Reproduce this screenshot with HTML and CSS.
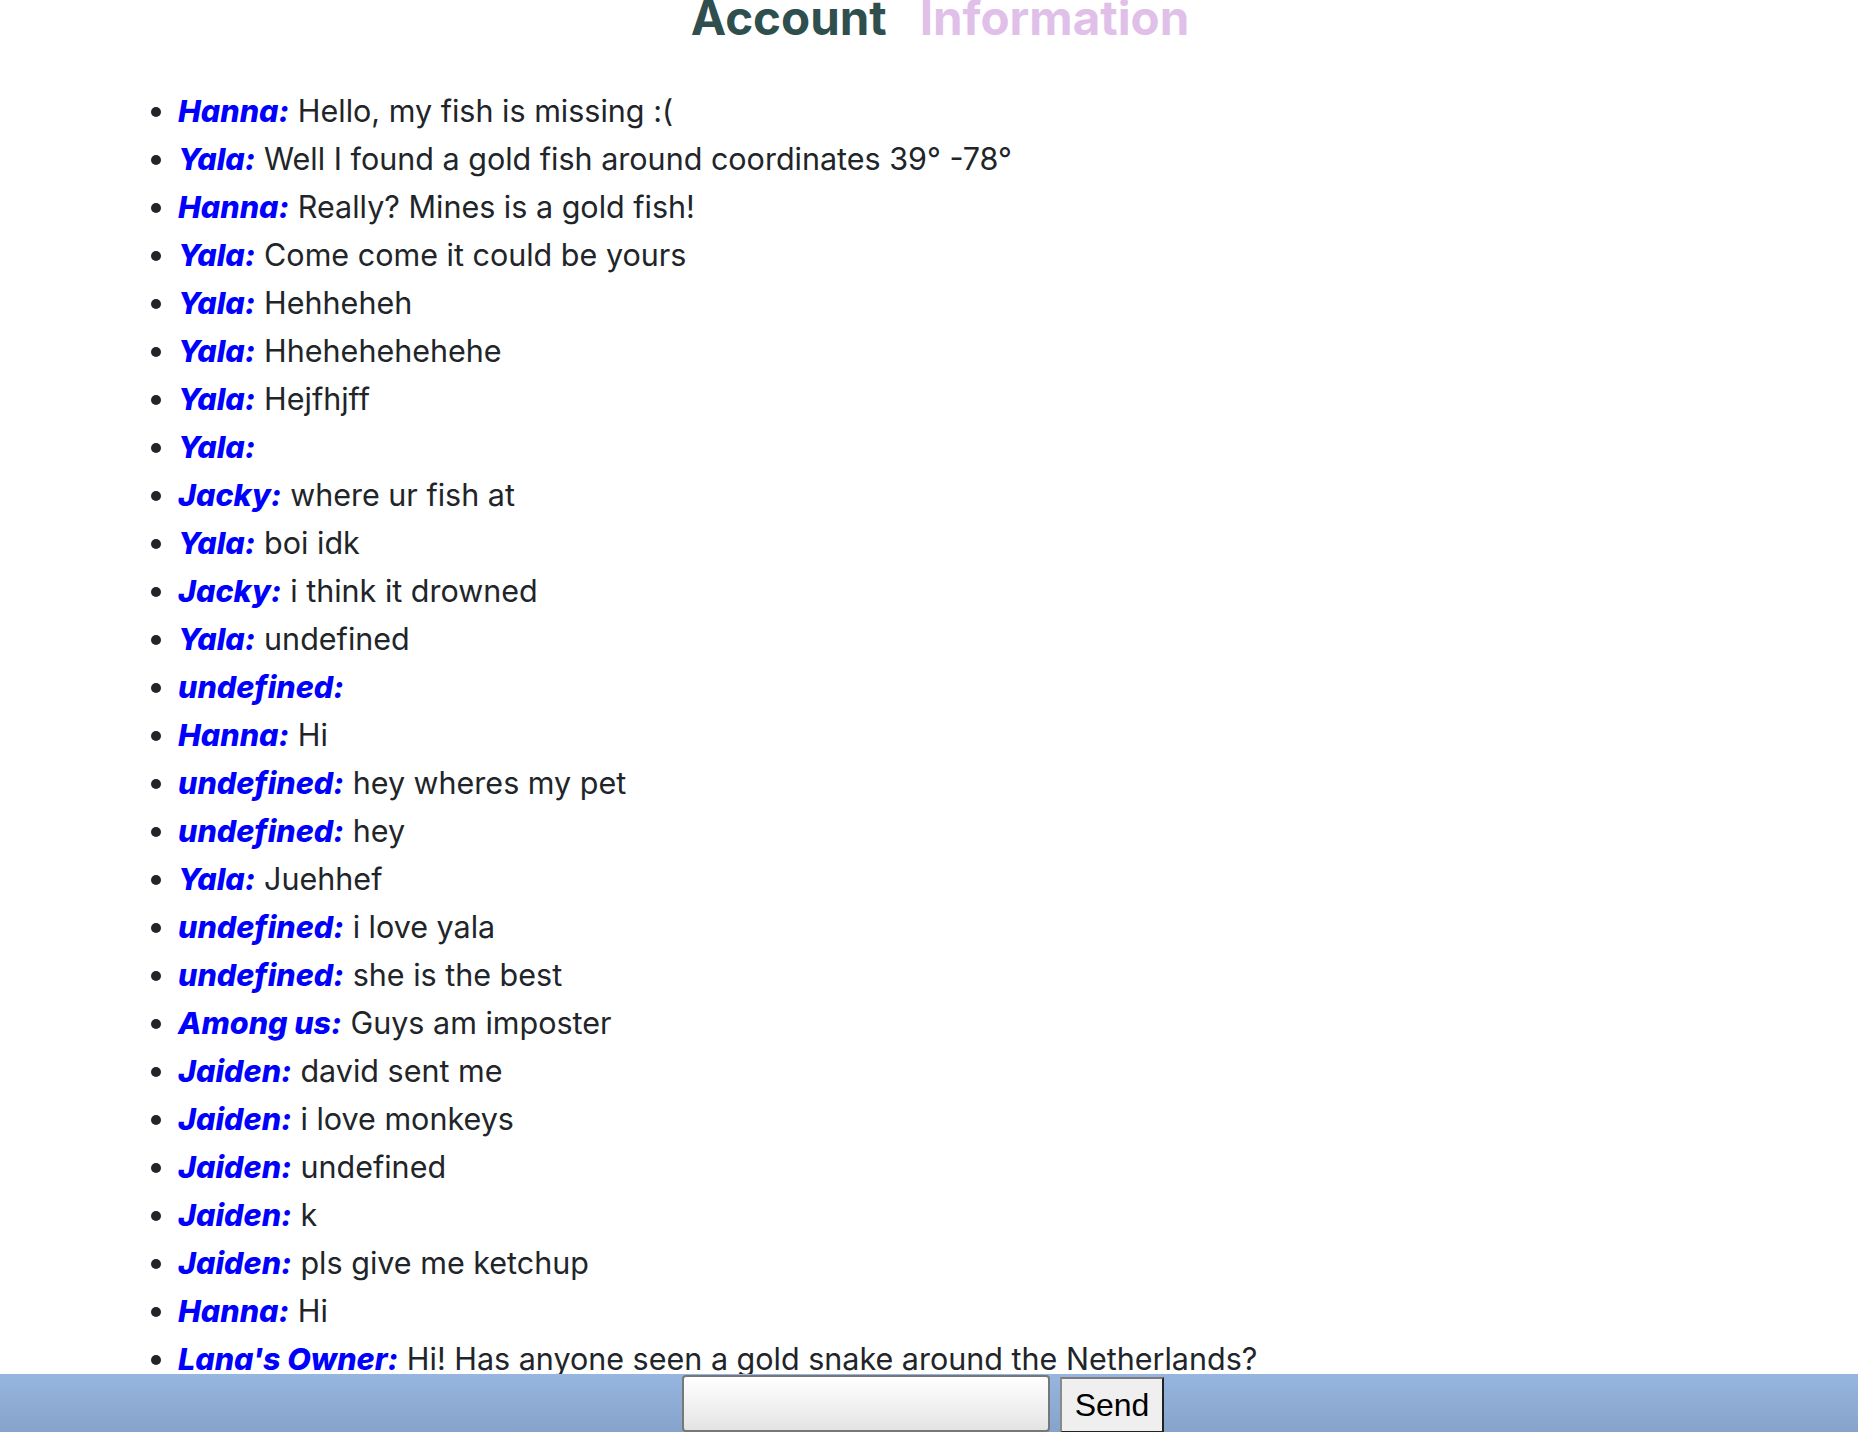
FILE: index.html
```html
<!DOCTYPE html>
<html>
<head>
<meta charset="utf-8">
<link rel="stylesheet" href="styles.css">
</head>
<body>
<h1 class="title"><span class="t-dark">Account</span><span class="t-light">Information</span></h1>
<ul class="messages">
<li><span class="name">Hanna:</span> Hello, my fish is missing :(</li>
<li><span class="name">Yala:</span> Well I found a gold fish around coordinates 39° -78°</li>
<li><span class="name">Hanna:</span> Really? Mines is a gold fish!</li>
<li><span class="name">Yala:</span> Come come it could be yours</li>
<li><span class="name">Yala:</span> Hehheheh</li>
<li><span class="name">Yala:</span> Hhehehehehehe</li>
<li><span class="name">Yala:</span> Hejfhjff</li>
<li><span class="name">Yala:</span> </li>
<li><span class="name">Jacky:</span> where ur fish at</li>
<li><span class="name">Yala:</span> boi idk</li>
<li><span class="name">Jacky:</span> i think it drowned</li>
<li><span class="name">Yala:</span> undefined</li>
<li><span class="name">undefined:</span> </li>
<li><span class="name">Hanna:</span> Hi</li>
<li><span class="name">undefined:</span> hey wheres my pet</li>
<li><span class="name">undefined:</span> hey</li>
<li><span class="name">Yala:</span> Juehhef</li>
<li><span class="name">undefined:</span> i love yala</li>
<li><span class="name">undefined:</span> she is the best</li>
<li><span class="name">Among us:</span> Guys am imposter</li>
<li><span class="name">Jaiden:</span> david sent me</li>
<li><span class="name">Jaiden:</span> i love monkeys</li>
<li><span class="name">Jaiden:</span> undefined</li>
<li><span class="name">Jaiden:</span> k</li>
<li><span class="name">Jaiden:</span> pls give me ketchup</li>
<li><span class="name">Hanna:</span> Hi</li>
<li><span class="name">Lana's Owner:</span> Hi! Has anyone seen a gold snake around the Netherlands?</li>
</ul>
<div class="sendbar">
  <input class="msg-input" type="text">
  <button class="send-btn">Send</button>
</div>
</body>
</html>
```

FILE: styles.css
```css
html, body {
  margin: 0;
  padding: 0;
  background: #ffffff;
}
body {
  font-family: Inter, "Noto Sans", sans-serif;
  color: #212529;
  overflow: hidden;
  height: 1432px;
}
.title {
  margin: -6px 0 0 0;
  display: flex;
  justify-content: center;
  gap: 33px;
  font-size: 47.5px;
  line-height: 48px;
  font-weight: 700;
  padding-left: 22px;
}
.t-dark { color: #2f4f4f; }
.t-light { color: #e0c0e8; }
.messages {
  margin: 45px 0 0 178px;
  padding: 0;
  font-size: 30.5px;
  line-height: 48px;
}
.messages li {
  height: 48px;
}
.name {
  color: #0000ff;
  font-weight: 800;
  font-style: italic;
}
.sendbar {
  position: fixed;
  left: 0;
  right: 0;
  bottom: 0;
  height: 58px;
  background: linear-gradient(180deg, #96b6e0 0%, #86a3ca 100%);
  display: flex;
  justify-content: center;
  align-items: flex-start;
  gap: 10px;
  padding: 1px 12px 0 0;
  box-sizing: border-box;
}
.msg-input {
  width: 368px;
  height: 57px;
  box-sizing: border-box;
  border: 2px solid #777777;
  border-radius: 4px;
  background: linear-gradient(180deg, #ffffff 0%, #e4e4e4 100%);
  margin: 0;
}
.send-btn {
  width: 104px;
  height: 56px;
  margin: 2px 0 0 0;
  box-sizing: border-box;
  border: 2px solid;
  border-color: #7a7a7a #222222 #222222 #8a8a8a;
  background: #efefef;
  font-family: "Liberation Sans", Arial, sans-serif;
  font-size: 32px;
  color: #000000;
  padding: 0;
}
```
